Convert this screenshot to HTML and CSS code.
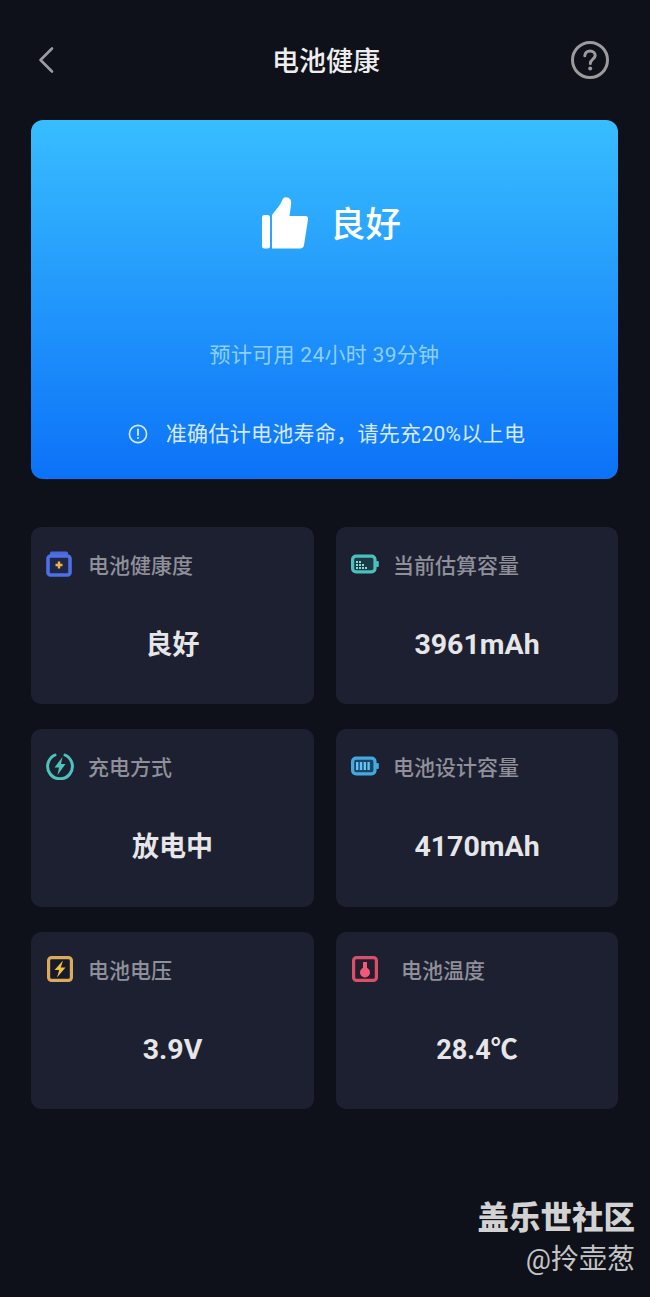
FILE: index.html
```html
<!DOCTYPE html>
<html lang="zh-CN">
<head>
    <meta charset="UTF-8">
    <title>电池健康</title>
    <link rel="stylesheet" href="styles.css">
</head>
<body>
    <div class="page">
        <!-- header -->
        <div class="header">
            <svg class="back" width="18" height="28" viewBox="0 0 18 28"><path d="M15 2.5 L3.5 14 L15 25.5" fill="none" stroke="#9a9ca1" stroke-width="2.6" stroke-linecap="round" stroke-linejoin="round"/></svg>
            <div class="title">电池健康</div>
            <svg class="help" width="40" height="40" viewBox="0 0 40 40">
                <circle cx="20" cy="20" r="17.5" fill="none" stroke="#9b9b9d" stroke-width="3"/>
                <path d="M14.8 15.8 C14.8 12.8 17 11 20 11 C23 11 25.2 12.9 25.2 15.5 C25.2 19 20.3 19.3 20.3 23.4" fill="none" stroke="#9b9b9d" stroke-width="3" stroke-linecap="round"/>
                <circle cx="20.2" cy="28.4" r="2" fill="#9b9b9d"/>
            </svg>
        </div>

        <!-- hero -->
        <div class="hero">
            <div class="status">
                <svg class="thumb" width="47" height="52" viewBox="0 0 47 52">
                    <rect x="0" y="18" width="8" height="33.5" rx="2.5" fill="#fff"/>
                    <path d="M10 18 L17 9 C19 6 20 4 20.5 2.5 C21.5 0 24 -0.3 26.5 0.8 C29 2 29.5 5 29 8 L27.5 19 L43.5 19 C45.5 19 46.3 20.5 46 22.5 L42 48 C41.7 50 40.5 51.5 38 51.5 L10 51.5 Z" fill="#fff"/>
                </svg>
                <div class="status-text">良好</div>
            </div>
            <div class="estimate">预计可用 24小时 39分钟</div>
            <div class="note">
                <svg width="20" height="20" viewBox="0 0 20 20">
                    <circle cx="10" cy="10" r="8.6" fill="none" stroke="#d5eafe" stroke-width="1.6"/>
                    <path d="M10 5.4 V11" stroke="#d5eafe" stroke-width="1.8" stroke-linecap="round"/>
                    <circle cx="10" cy="14" r="1.1" fill="#d5eafe"/>
                </svg>
                <span>准确估计电池寿命，请先充20%以上电</span>
            </div>
        </div>

        <!-- cards -->
        <div class="grid">
            <div class="card">
                <div class="label">
                    <svg class="icon" width="26" height="26" viewBox="0 0 26 26">
                        <rect x="4" y="0.5" width="18" height="5" rx="1.5" fill="#4c68d8"/>
                        <rect x="2" y="5" width="22" height="19" rx="2.5" fill="#1f2648" stroke="#4f6fe6" stroke-width="3.6"/>
                        <path d="M13 10.5 V17.5 M9.5 14 H16.5" stroke="#e8b64c" stroke-width="2.4"/>
                    </svg>
                    <span>电池健康度</span>
                </div>
                <div class="value">良好</div>
            </div>
            <div class="card">
                <div class="label tight">
                    <svg class="icon" width="28" height="20" viewBox="0 0 28 20">
                        <rect x="1.6" y="2.2" width="22.4" height="15.6" rx="3.4" fill="#1c3a44" stroke="#4cc0bd" stroke-width="3.2"/>
                        <rect x="25" y="7" width="2.8" height="6" rx="1" fill="#4cc0bd"/>
                        <path d="M5 8 H11 M5 11 H14 M5 14 H17" stroke="#86dcd8" stroke-width="2.2" stroke-dasharray="2 1"/>
                    </svg>
                    <span>当前估算容量</span>
                </div>
                <div class="value num">3961mAh</div>
            </div>
            <div class="card">
                <div class="label tight">
                    <svg class="icon" width="28" height="28" viewBox="0 0 28 28">
                        <path d="M9 3 A12.4 12.4 0 1 0 19 3" fill="none" stroke="#4cc4bd" stroke-width="3" stroke-linecap="round"/>
                        <path d="M16.5 5 L8.5 15.5 H13 L11.5 23 L19.5 12 H15 Z" fill="#4cc4bd"/>
                    </svg>
                    <span>充电方式</span>
                </div>
                <div class="value">放电中</div>
            </div>
            <div class="card">
                <div class="label tight">
                    <svg class="icon" width="28" height="20" viewBox="0 0 28 20">
                        <rect x="1.6" y="2.2" width="22.4" height="15.6" rx="3.4" fill="#1a4564" stroke="#44a9e0" stroke-width="3.2"/>
                        <rect x="25" y="7" width="2.8" height="6" rx="1" fill="#44a9e0"/>
                        <path d="M6.2 6 V14 M10 6 V14 M13.8 6 V14 M17.6 6 V14" stroke="#62c4f4" stroke-width="2.4"/>
                    </svg>
                    <span>电池设计容量</span>
                </div>
                <div class="value num">4170mAh</div>
            </div>
            <div class="card">
                <div class="label tight">
                    <svg class="icon" width="28" height="28" viewBox="0 0 28 28">
                        <rect x="2.6" y="2.6" width="22.8" height="22.8" rx="3" fill="#171a2b" stroke="#dcaa58" stroke-width="3.2"/>
                        <path d="M17 5.5 L8.5 15 H13.2 L11 22.5 L19.5 12.5 H14.8 Z" fill="#f0c040"/>
                    </svg>
                    <span>电池电压</span>
                </div>
                <div class="value num">3.9V</div>
            </div>
            <div class="card">
                <div class="label temp">
                    <svg class="icon" width="28" height="28" viewBox="0 0 28 28">
                        <rect x="2.6" y="2.6" width="22.8" height="22.8" rx="3" fill="#241d2e" stroke="#d9506b" stroke-width="3.2"/>
                        <rect x="12" y="7" width="4" height="10" fill="#f05a78"/>
                        <circle cx="14" cy="17.5" r="5" fill="#f05a78"/>
                    </svg>
                    <span>电池温度</span>
                </div>
                <div class="value">28.4℃</div>
            </div>
        </div>
    </div>

    <!-- watermark -->
    <div class="mark">
        <div class="mark-name">盖乐世社区</div>
        <div class="mark-user">@拎壶葱</div>
    </div>
</body>
</html>
```

FILE: styles.css
```css
*{
    margin: 0;
    padding: 0;
    box-sizing: border-box;
}

html, body{
    height: 100%;
}

body{
    background-color: #0e1119;
    font-family: "Roboto", "Noto Sans CJK SC", sans-serif;
    overflow: hidden;
    position: relative;
}

.page{
    width: 650px;
    padding: 0 32px 0 31px;
}

/* header */
.header{
    height: 120px;
    display: grid;
    grid-template-columns: 1fr auto 1fr;
    align-items: center;
    padding: 0 8px 0 11px;
}

.back{
    margin-left: -5px;
}

.help{
    justify-self: end;
}

.title{
    font-size: 27px;
    font-weight: 500;
    color: #eeeeee;
    margin-bottom: 2px;
}

/* hero */
.hero{
    height: 359px;
    border-radius: 12px;
    background: linear-gradient(#38bdff, #0c72f8);
    display: flex;
    flex-direction: column;
    align-items: center;
}

.status{
    display: flex;
    align-items: center;
    gap: 21px;
    margin-top: 77px;
    height: 52px;
    padding-left: 14px;
}

.status-text{
    font-size: 35.5px;
    font-weight: 500;
    color: #ffffff;
    padding-bottom: 3px;
}

.estimate{
    margin-top: 92px;
    font-size: 21px;
    letter-spacing: 0.3px;
    line-height: 28px;
    color: #8fd0fb;
}

.note{
    margin-top: 51px;
    padding-left: 4px;
    display: flex;
    align-items: center;
    gap: 18px;
    font-size: 21px;
    letter-spacing: 0.3px;
    line-height: 28px;
    color: #d5eafe;
}

/* cards */
.grid{
    margin-top: 48px;
    display: grid;
    grid-template-columns: 283px 282px;
    grid-template-rows: 177px 178px 177px;
    column-gap: 22px;
    row-gap: 25px;
}

.card{
    background-color: #1d2031;
    border-radius: 10px;
    padding: 22px 0 0 15px;
}

.label{
    height: 30px;
    display: flex;
    align-items: center;
    gap: 16px;
    font-size: 21px;
    font-weight: 500;
    color: #8f9099;
}

.label.tight{
    gap: 14px;
}

.label.temp{
    gap: 22px;
}

.value{
    margin-top: 46px;
    padding-right: 15px;
    text-align: center;
    font-size: 27px;
    line-height: 40px;
    font-weight: 700;
    color: #e6e6e8;
}

.value.num{
    font-size: 28.5px;
}

/* watermark over the page */
.mark{
    position: absolute;
    right: 15px;
    top: 1198px;
    text-align: right;
}

.mark-name{
    font-size: 31.5px;
    line-height: 42px;
    font-weight: 900;
    color: #d2d2d2;
}

.mark-user{
    font-size: 28px;
    line-height: 40px;
    color: #c4c4c4;
}
```
